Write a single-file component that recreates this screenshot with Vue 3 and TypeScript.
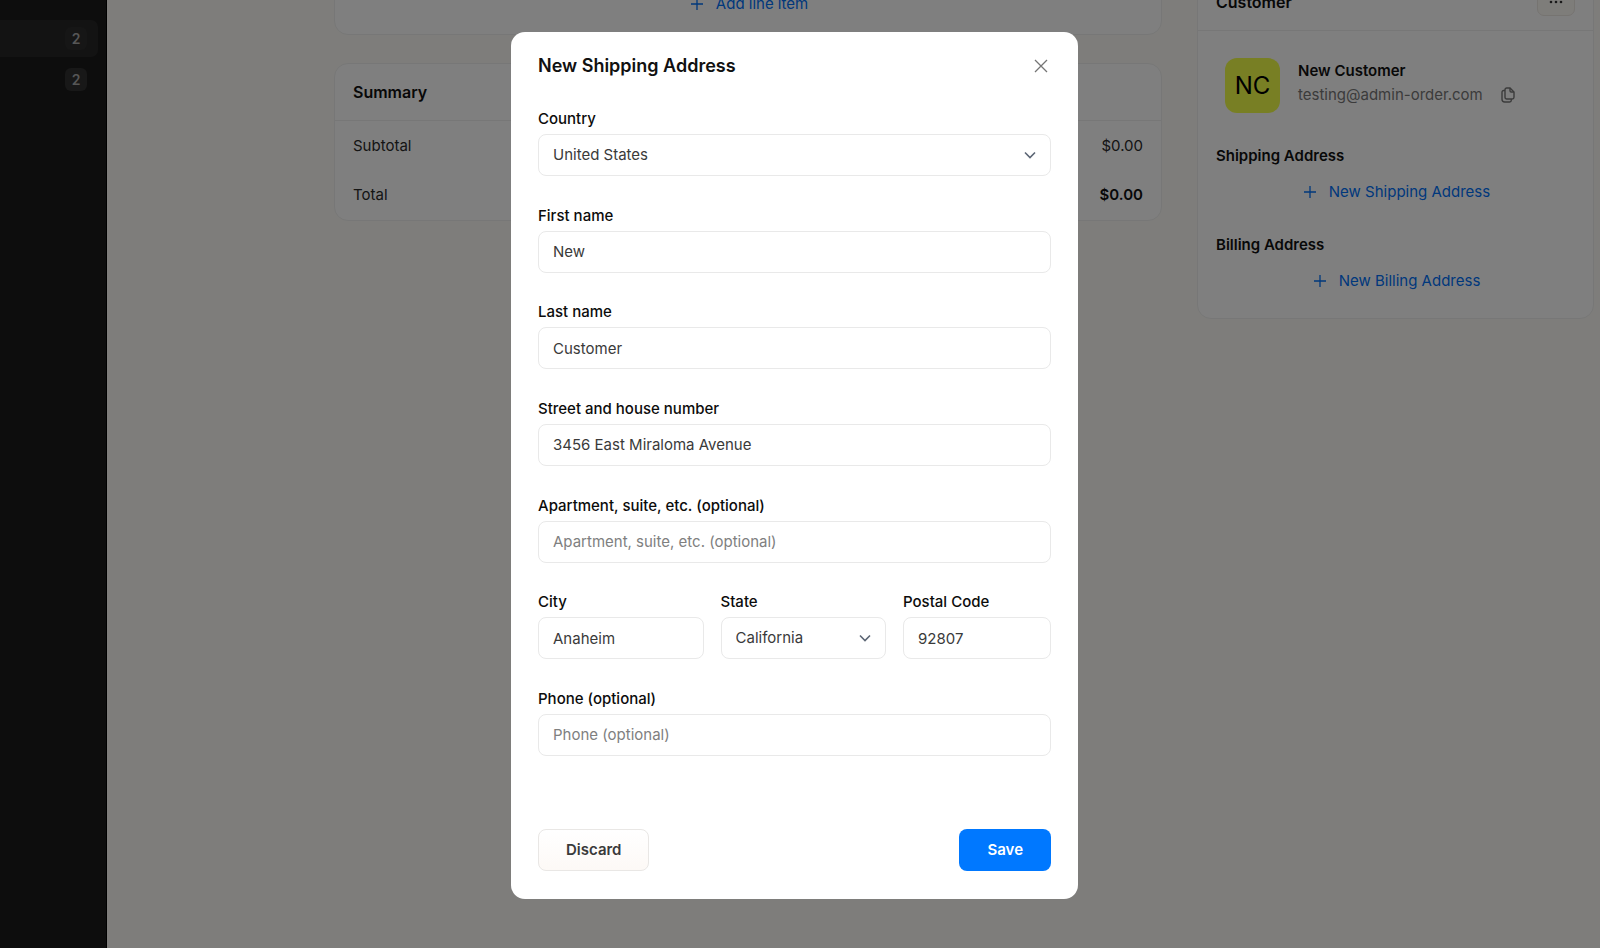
<script setup lang="ts">
import { reactive } from 'vue'

interface Address {
  country: string
  firstName: string
  lastName: string
  street: string
  apartment: string
  city: string
  state: string
  postalCode: string
  phone: string
}

const address = reactive<Address>({
  country: 'United States',
  firstName: 'New',
  lastName: 'Customer',
  street: '3456 East Miraloma Avenue',
  apartment: '',
  city: 'Anaheim',
  state: 'California',
  postalCode: '92807',
  phone: '',
})

const navCounts = [
  { count: 2, active: true },
  { count: 2, active: false },
]
</script>

<template>
  <div class="page">
    <nav class="sidebar">
      <a
        v-for="(item, i) in navCounts"
        :key="i"
        href="#"
        class="nav-item"
        :class="{ active: item.active }"
      >
        <span class="badge">{{ item.count }}</span>
      </a>
    </nav>

    <main class="content">
      <div class="columns">
        <div class="left">
          <section class="card line-items">
            <button type="button" class="add">
              <svg viewBox="0 0 14 14" aria-hidden="true"><path d="M7 1v12M1 7h12" /></svg>
              Add line item
            </button>
          </section>
          <section class="card">
            <header class="card-head"><h2>Summary</h2></header>
            <dl class="totals">
              <div><dt>Subtotal</dt><dd>$0.00</dd></div>
              <div><dt>Total</dt><dd class="strong">$0.00</dd></div>
            </dl>
          </section>
        </div>

        <aside class="card customer">
          <header class="card-head">
            <h2>Customer</h2>
            <button type="button" class="more" aria-label="More">
              <svg viewBox="0 0 14 4" aria-hidden="true">
                <circle cx="2" cy="2" r="1.3" /><circle cx="7" cy="2" r="1.3" /><circle cx="12" cy="2" r="1.3" />
              </svg>
            </button>
          </header>
          <div class="person">
            <span class="avatar">NC</span>
            <div class="who">
              <strong>New Customer</strong>
              <span class="mail">
                testing@admin-order.com
                <button type="button" class="copy" aria-label="Copy">
                  <svg viewBox="0 0 14 16" aria-hidden="true">
                    <path d="M5.700 1h3.300L13 5v5.300a1.700 1.700 0 0 1-1.700 1.700H5.700A1.700 1.700 0 0 1 4 10.300V2.700A1.700 1.700 0 0 1 5.700 1z" />
                    <path d="M9 1v2.800A1.200 1.200 0 0 0 10.200 5H13" />
                    <path d="M4 3.500H2.700A1.700 1.700 0 0 0 1 5.200v7.100A2.700 2.700 0 0 0 3.700 15h4.900a1.700 1.700 0 0 0 1.700-1.700V12" />
                  </svg>
                </button>
              </span>
            </div>
          </div>
          <div class="address">
            <h3>Shipping Address</h3>
            <button type="button" class="add">
              <svg viewBox="0 0 14 14" aria-hidden="true"><path d="M7 1v12M1 7h12" /></svg>
              New Shipping Address
            </button>
          </div>
          <div class="address">
            <h3>Billing Address</h3>
            <button type="button" class="add">
              <svg viewBox="0 0 14 14" aria-hidden="true"><path d="M7 1v12M1 7h12" /></svg>
              New Billing Address
            </button>
          </div>
        </aside>
      </div>
    </main>

    <div class="overlay">
      <form class="dialog" role="dialog" aria-labelledby="dialog-title" @submit.prevent>
        <header class="dialog-head">
          <h1 id="dialog-title">New Shipping Address</h1>
          <button type="button" class="close" aria-label="Close">
            <svg viewBox="0 0 14 14" aria-hidden="true"><path d="M1 1l12 12M13 1L1 13" /></svg>
          </button>
        </header>

        <div class="fields">
          <div class="field">
            <label for="country">Country</label>
            <div class="select">
              <select id="country" v-model="address.country">
                <option>United States</option>
              </select>
              <svg viewBox="0 0 12 8" aria-hidden="true"><path d="M1 1.500l5 5 5-5" /></svg>
            </div>
          </div>
          <div class="field">
            <label for="first">First name</label>
            <input id="first" v-model="address.firstName" type="text" />
          </div>
          <div class="field">
            <label for="last">Last name</label>
            <input id="last" v-model="address.lastName" type="text" />
          </div>
          <div class="field">
            <label for="street">Street and house number</label>
            <input id="street" v-model="address.street" type="text" />
          </div>
          <div class="field">
            <label for="apartment">Apartment, suite, etc. (optional)</label>
            <input
              id="apartment"
              v-model="address.apartment"
              type="text"
              placeholder="Apartment, suite, etc. (optional)"
            />
          </div>
          <div class="row">
            <div class="field">
              <label for="city">City</label>
              <input id="city" v-model="address.city" type="text" />
            </div>
            <div class="field">
              <label for="state">State</label>
              <div class="select">
                <select id="state" v-model="address.state">
                  <option>California</option>
                </select>
                <svg viewBox="0 0 12 8" aria-hidden="true"><path d="M1 1.500l5 5 5-5" /></svg>
              </div>
            </div>
            <div class="field">
              <label for="postal">Postal Code</label>
              <input id="postal" v-model="address.postalCode" type="text" />
            </div>
          </div>
          <div class="field">
            <label for="phone">Phone (optional)</label>
            <input id="phone" v-model="address.phone" type="tel" placeholder="Phone (optional)" />
          </div>
        </div>

        <footer class="actions">
          <button type="button" class="discard">Discard</button>
          <button type="submit" class="save">Save</button>
        </footer>
      </form>
    </div>
  </div>
</template>

<style>
body {
  margin: 0;
}
</style>

<style scoped>
.page,
.page * {
  box-sizing: border-box;
}
.page {
  display: flex;
  height: 100vh;
  overflow: hidden;
  background: #fcfbf7;
  color: #111;
  font: 400 15px/20px Inter, "Liberation Sans", sans-serif;
}
h1,
h2,
h3,
dl,
dd {
  margin: 0;
}
button,
input,
select {
  margin: 0;
  font: inherit;
}
button {
  display: inline-flex;
  align-items: center;
  justify-content: center;
  padding: 0;
  border: 0;
  background: none;
  color: inherit;
}
svg {
  display: block;
  flex: none;
  fill: none;
  stroke: currentColor;
}

.sidebar {
  display: flex;
  flex: none;
  flex-direction: column;
  gap: 4px;
  width: 107px;
  padding: 20px 8px 0 0;
  border-right: 1px solid #000;
  background: #1a1a1a;
}
.nav-item {
  display: flex;
  align-items: center;
  justify-content: flex-end;
  height: 37px;
  padding-right: 11px;
  border-radius: 0 7px 7px 0;
  color: #acacac;
  text-decoration: none;
}
.nav-item.active {
  background: #262626;
}
.badge {
  width: 22px;
  border-radius: 6px;
  background: #303030;
  font-size: 14px;
  font-weight: 600;
  line-height: 23px;
  text-align: center;
}
.active .badge {
  background: #2c2c2c;
}

.content {
  flex: 1;
  min-width: 0;
}
.columns {
  display: grid;
  grid-template-columns: minmax(0, 828px) minmax(0, 397px);
  gap: 35px;
  align-items: start;
  justify-content: end;
  margin-top: -27px;
  padding-right: 6px;
}
.left {
  display: grid;
  gap: 28px;
}
.card {
  border: 1px solid #efefee;
  border-radius: 14px;
  background: #fff;
}
.line-items {
  display: flex;
  justify-content: center;
  padding: 20px 0;
}
.add {
  gap: 12px;
  padding-left: 2px;
  color: #0070f8;
}
.add svg {
  width: 14px;
  height: 14px;
  stroke-width: 1.3;
}
.card-head {
  display: flex;
  align-items: center;
  justify-content: space-between;
  height: 57px;
  padding: 0 18px;
  border-bottom: 1px solid #efefee;
}
h2 {
  font-size: 16px;
  font-weight: 600;
  line-height: 24px;
}
.totals {
  display: grid;
  gap: 29px;
  padding: 15px 18px;
  color: #2a2a2a;
}
.totals div {
  display: flex;
  justify-content: space-between;
}
.strong {
  color: #111;
  font-weight: 600;
}
.more {
  width: 38px;
  height: 28px;
  border: 1px solid #ece8e2;
  border-radius: 7px;
  background: #fdfaf5;
}
.more svg {
  width: 14px;
  fill: #333;
  stroke: none;
}
.person {
  display: flex;
  gap: 18px;
  align-items: flex-start;
  padding: 27px 27px 0;
}
.avatar {
  flex: none;
  width: 55px;
  border-radius: 12px;
  background: #f0ff48;
  color: #000;
  font-size: 24px;
  line-height: 55px;
  text-align: center;
}
.who {
  display: grid;
  gap: 4px;
  padding-top: 3px;
}
.who strong,
h3 {
  font-size: 15px;
  font-weight: 600;
}
.mail {
  display: flex;
  gap: 18px;
  align-items: center;
  color: #777;
}
.copy svg {
  width: 14px;
  height: 16px;
  stroke-width: 1.4;
}
.address {
  display: grid;
  gap: 16px;
  padding: 33px 18px 0;
}
.address .add {
  justify-self: center;
}
.customer {
  padding-bottom: 27px;
}

.overlay {
  position: fixed;
  inset: 0;
  display: flex;
  justify-content: center;
  padding: 32px 11px 49px 0;
  background: rgba(0, 0, 0, 0.5);
}
.dialog {
  display: flex;
  flex-direction: column;
  width: 567px;
  max-width: 100%;
  padding: 22px 27px 28px;
  border-radius: 14px;
  background: #fff;
}
.dialog-head {
  display: flex;
  align-items: center;
  justify-content: space-between;
  margin-bottom: 30px;
}
h1 {
  font-size: 18px;
  font-weight: 600;
  line-height: 24px;
}
.close {
  width: 20px;
  height: 20px;
  color: #757575;
}
.close svg {
  width: 14px;
  height: 14px;
  stroke-width: 1.3;
}
.fields {
  display: flex;
  flex: 1;
  flex-direction: column;
  justify-content: space-between;
  margin-bottom: 73px;
}
.row {
  display: grid;
  grid-template-columns: 1fr 1fr 148px;
  gap: 17px;
}
.field {
  display: grid;
  gap: 4px;
  min-width: 0;
}
label {
  color: #0c0c0c;
  font-weight: 500;
  line-height: 22px;
}
input,
select {
  width: 100%;
  min-width: 0;
  height: 42px;
  padding: 0 14px;
  border: 1px solid #e9e9e9;
  border-radius: 8px;
  outline: 0;
  background: #fff;
  color: #3a3a3a;
}
input::placeholder {
  color: #808080;
  opacity: 1;
}
.select {
  display: grid;
  align-items: center;
}
.select > * {
  grid-area: 1 / 1;
}
.select select {
  appearance: none;
}
.select svg {
  justify-self: end;
  width: 12px;
  height: 8px;
  margin-right: 15px;
  color: #5c6675;
  stroke-width: 1.6;
  pointer-events: none;
}
.actions {
  display: flex;
  justify-content: space-between;
}
.actions button {
  height: 42px;
  border-radius: 8px;
  font-weight: 600;
}
.discard {
  padding: 0 27px;
  border: 1px solid #e9e7e5;
  background: linear-gradient(#fff, #fdf9f6);
  color: #3a3a3a;
}
.save {
  padding: 0 28px;
  background: #0078ff;
  color: #fff;
}
</style>
